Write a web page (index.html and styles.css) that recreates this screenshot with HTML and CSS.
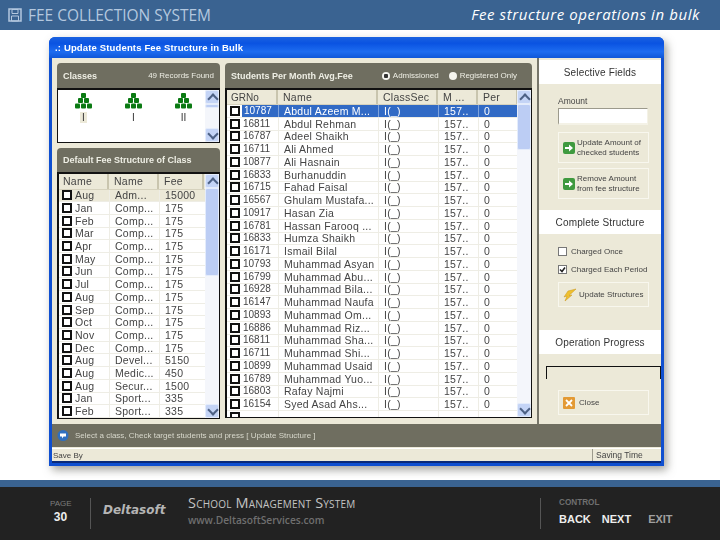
FILE: index.html
```html
<!DOCTYPE html>
<html>
<head>
    <meta charset="utf-8">
    <title>Fee structure operations in bulk</title>
    <link rel="stylesheet" href="styles.css">
</head>
<body>
<div class="page">
    <header class="top-bar">
        <div class="system-name">
            <svg class="disk-icon" viewBox="0 0 14 14" width="14" height="14">
                <path d="M1 1h12v12H1z" fill="none" stroke="#b4c8df" stroke-width="1.5"/>
                <path d="M4 1.5h6v4H4zM3.5 8h7v5h-7z" fill="none" stroke="#b4c8df"/>
            </svg>
            FEE COLLECTION SYSTEM
        </div>
        <div class="slide-title">Fee structure operations in bulk</div>
    </header>

    <main class="stage">
        <div class="window">
            <div class="title-bar">.: Update Students Fee Structure in Bulk</div>
            <div class="client">
                <div class="work">
                    <div class="left-col">
                        <div class="panel-head">
                            <span>Classes</span>
                            <span class="found">49 Records Found</span>
                        </div>
                        <div class="class-box">
                            <div class="class-icons">
                                <div class="class-item">
                                    <svg class="tree" viewBox="0 0 17 16" width="17" height="16"><use href="#tree"/></svg>
                                    <span class="class-name picked">I</span>
                                </div>
                                <div class="class-item">
                                    <svg class="tree" viewBox="0 0 17 16" width="17" height="16"><use href="#tree"/></svg>
                                    <span class="class-name">I</span>
                                </div>
                                <div class="class-item">
                                    <svg class="tree" viewBox="0 0 17 16" width="17" height="16"><use href="#tree"/></svg>
                                    <span class="class-name">II</span>
                                </div>
                            </div>
                            <div class="scrollbar">
                                <div class="arrow up"></div>
                                <div class="thumb short"></div>
                                <div class="track"></div>
                                <div class="arrow down"></div>
                            </div>
                        </div>

                        <div class="panel-head second">
                            <span>Default Fee Structure of Class</span>
                        </div>
                        <div class="list-box fee-box">
                            <div class="list">
                                <div class="fee-row list-head"><span>Name</span><span>Name</span><span>Fee</span></div>
                                <div class="fee-row marked"><span><i class="check"></i>Aug</span><span>Adm...</span><span>15000</span></div>
                                <div class="fee-row"><span><i class="check"></i>Jan</span><span>Comp...</span><span>175</span></div>
                                <div class="fee-row"><span><i class="check"></i>Feb</span><span>Comp...</span><span>175</span></div>
                                <div class="fee-row"><span><i class="check"></i>Mar</span><span>Comp...</span><span>175</span></div>
                                <div class="fee-row"><span><i class="check"></i>Apr</span><span>Comp...</span><span>175</span></div>
                                <div class="fee-row"><span><i class="check"></i>May</span><span>Comp...</span><span>175</span></div>
                                <div class="fee-row"><span><i class="check"></i>Jun</span><span>Comp...</span><span>175</span></div>
                                <div class="fee-row"><span><i class="check"></i>Jul</span><span>Comp...</span><span>175</span></div>
                                <div class="fee-row"><span><i class="check"></i>Aug</span><span>Comp...</span><span>175</span></div>
                                <div class="fee-row"><span><i class="check"></i>Sep</span><span>Comp...</span><span>175</span></div>
                                <div class="fee-row"><span><i class="check"></i>Oct</span><span>Comp...</span><span>175</span></div>
                                <div class="fee-row"><span><i class="check"></i>Nov</span><span>Comp...</span><span>175</span></div>
                                <div class="fee-row"><span><i class="check"></i>Dec</span><span>Comp...</span><span>175</span></div>
                                <div class="fee-row"><span><i class="check"></i>Aug</span><span>Devel...</span><span>5150</span></div>
                                <div class="fee-row"><span><i class="check"></i>Aug</span><span>Medic...</span><span>450</span></div>
                                <div class="fee-row"><span><i class="check"></i>Aug</span><span>Secur...</span><span>1500</span></div>
                                <div class="fee-row"><span><i class="check"></i>Jan</span><span>Sport...</span><span>335</span></div>
                                <div class="fee-row"><span><i class="check"></i>Feb</span><span>Sport...</span><span>335</span></div>
                            </div>
                            <div class="scrollbar">
                                <div class="arrow up"></div>
                                <div class="thumb tall"></div>
                                <div class="track"></div>
                                <div class="arrow down"></div>
                            </div>
                        </div>
                    </div>

                    <div class="mid-col">
                        <div class="panel-head">
                            <span>Students Per Month Avg.Fee</span>
                            <span class="radios">
                                <span class="radio"><i class="dot on"></i>Admissioned</span>
                                <span class="radio"><i class="dot"></i>Registered Only</span>
                            </span>
                        </div>
                        <div class="list-box student-box">
                            <div class="list">
                                <div class="student-row list-head"><span>GRNo</span><span>Name</span><span>ClassSec</span><span>M ...</span><span>Per</span></div>
                                <div class="student-row selected"><span><i class="check"></i><b>10787</b></span><span>Abdul Azeem M...</span><span>I(_)</span><span>157..</span><span>0</span></div>
                                <div class="student-row"><span><i class="check"></i>16811</span><span>Abdul Rehman</span><span>I(_)</span><span>157..</span><span>0</span></div>
                                <div class="student-row"><span><i class="check"></i>16787</span><span>Adeel Shaikh</span><span>I(_)</span><span>157..</span><span>0</span></div>
                                <div class="student-row"><span><i class="check"></i>16711</span><span>Ali Ahmed</span><span>I(_)</span><span>157..</span><span>0</span></div>
                                <div class="student-row"><span><i class="check"></i>10877</span><span>Ali Hasnain</span><span>I(_)</span><span>157..</span><span>0</span></div>
                                <div class="student-row"><span><i class="check"></i>16833</span><span>Burhanuddin</span><span>I(_)</span><span>157..</span><span>0</span></div>
                                <div class="student-row"><span><i class="check"></i>16715</span><span>Fahad Faisal</span><span>I(_)</span><span>157..</span><span>0</span></div>
                                <div class="student-row"><span><i class="check"></i>16567</span><span>Ghulam Mustafa...</span><span>I(_)</span><span>157..</span><span>0</span></div>
                                <div class="student-row"><span><i class="check"></i>10917</span><span>Hasan Zia</span><span>I(_)</span><span>157..</span><span>0</span></div>
                                <div class="student-row"><span><i class="check"></i>16781</span><span>Hassan Farooq ...</span><span>I(_)</span><span>157..</span><span>0</span></div>
                                <div class="student-row"><span><i class="check"></i>16833</span><span>Humza Shaikh</span><span>I(_)</span><span>157..</span><span>0</span></div>
                                <div class="student-row"><span><i class="check"></i>16171</span><span>Ismail Bilal</span><span>I(_)</span><span>157..</span><span>0</span></div>
                                <div class="student-row"><span><i class="check"></i>10793</span><span>Muhammad Asyan</span><span>I(_)</span><span>157..</span><span>0</span></div>
                                <div class="student-row"><span><i class="check"></i>16799</span><span>Muhammad Abu...</span><span>I(_)</span><span>157..</span><span>0</span></div>
                                <div class="student-row"><span><i class="check"></i>16928</span><span>Muhammad Bila...</span><span>I(_)</span><span>157..</span><span>0</span></div>
                                <div class="student-row"><span><i class="check"></i>16147</span><span>Muhammad Naufa</span><span>I(_)</span><span>157..</span><span>0</span></div>
                                <div class="student-row"><span><i class="check"></i>10893</span><span>Muhammad Om...</span><span>I(_)</span><span>157..</span><span>0</span></div>
                                <div class="student-row"><span><i class="check"></i>16886</span><span>Muhammad Riz...</span><span>I(_)</span><span>157..</span><span>0</span></div>
                                <div class="student-row"><span><i class="check"></i>16811</span><span>Muhammad Sha...</span><span>I(_)</span><span>157..</span><span>0</span></div>
                                <div class="student-row"><span><i class="check"></i>16711</span><span>Muhammad Shi...</span><span>I(_)</span><span>157..</span><span>0</span></div>
                                <div class="student-row"><span><i class="check"></i>10899</span><span>Muhammad Usaid</span><span>I(_)</span><span>157..</span><span>0</span></div>
                                <div class="student-row"><span><i class="check"></i>16789</span><span>Muhammad Yuo...</span><span>I(_)</span><span>157..</span><span>0</span></div>
                                <div class="student-row"><span><i class="check"></i>16803</span><span>Rafay Najmi</span><span>I(_)</span><span>157..</span><span>0</span></div>
                                <div class="student-row"><span><i class="check"></i>16154</span><span>Syed Asad Ahs...</span><span>I(_)</span><span>157..</span><span>0</span></div>
                                <div class="student-row stub"><span><i class="check"></i></span><span></span><span></span><span></span><span></span></div>
                            </div>
                            <div class="scrollbar">
                                <div class="arrow up"></div>
                                <div class="thumb mid-thumb"></div>
                                <div class="track"></div>
                                <div class="arrow down"></div>
                            </div>
                        </div>
                    </div>

                    <aside class="right-col">
                        <div class="side-head first">Selective Fields</div>
                        <div class="side-body selective">
                            <label class="amount-label" for="amount">Amount</label>
                            <input id="amount" class="amount" type="text">
                            <div class="side-btn two-line">
                                <svg viewBox="0 0 12 12" width="12" height="12"><rect width="12" height="12" rx="2" fill="#3f9a3f"/><path d="M2 5h4V2.500L10 6 6 9.500V7H2z" fill="#fff"/></svg>
                                <span>Update Amount of checked students</span>
                            </div>
                            <div class="side-btn two-line">
                                <svg viewBox="0 0 12 12" width="12" height="12"><rect width="12" height="12" rx="2" fill="#3f9a3f"/><path d="M2 5h4V2.500L10 6 6 9.500V7H2z" fill="#fff"/></svg>
                                <span>Remove Amount from fee structure</span>
                            </div>
                        </div>
                        <div class="side-head">Complete Structure</div>
                        <div class="side-body complete">
                            <div class="tick-line"><i class="tick"></i>Charged Once</div>
                            <div class="tick-line">
                                <svg class="tick-mark" viewBox="0 0 9 9" width="9" height="9"><rect x=".5" y=".5" width="8" height="8" fill="#fff" stroke="#777"/><path d="m2 4.500 2 2 3-4" fill="none" stroke="#222" stroke-width="1.500"/></svg>
                                Charged Each Period
                            </div>
                            <div class="side-btn one-line">
                                <svg viewBox="0 0 14 14" width="14" height="14"><path d="M13 1 5 3 1 9l3-1-2 5 7-6-3 .5z" fill="#efc02e" stroke="#c9941a" stroke-width=".5"/></svg>
                                <span>Update Structures</span>
                            </div>
                        </div>
                        <div class="side-head">Operation Progress</div>
                        <div class="side-body progress-area">
                            <div class="progress"></div>
                            <div class="side-btn one-line close">
                                <svg viewBox="0 0 12 12" width="12" height="12"><rect width="12" height="12" rx="1" fill="#e39a35"/><path d="m3 3 6 6M9 3 3 9" stroke="#fff" stroke-width="1.800"/></svg>
                                <span>Close</span>
                            </div>
                        </div>
                    </aside>
                </div>

                <div class="message-bar">
                    <svg viewBox="0 0 12 12" width="12" height="12"><circle cx="6" cy="5.500" r="5.500" fill="#2f6fc0"/><path d="M3 3.500h6v3H6.500l-1.500 2v-2H3z" fill="#fff"/></svg>
                    <span>Select a class, Check target students and press [ Update Structure ]</span>
                </div>

                <div class="status-bar">
                    <span>Save By</span>
                    <span class="status-right">Saving Time</span>
                </div>
            </div>
        </div>
    </main>

    <div class="blue-strip"></div>
    <footer class="footer">
        <div class="page-no">
            <span class="page-label">PAGE</span>
            <span class="page-num">30</span>
        </div>
        <div class="brand">Deltasoft</div>
        <div class="product">
            <div class="product-name">School Management System</div>
            <div class="product-url">www.DeltasoftServices.com</div>
        </div>
        <div class="control">
            <div class="control-label">CONTROL</div>
            <div class="control-links">
                <a>BACK</a>
                <a>NEXT</a>
                <a class="exit">EXIT</a>
            </div>
        </div>
    </footer>
</div>

<svg class="defs" width="0" height="0">
    <defs>
        <g id="tree" fill="#0a7a12">
            <rect x="6" y="0" width="5" height="5" rx="1"/>
            <rect x="3" y="5" width="5" height="5" rx="1"/>
            <rect x="9" y="5" width="5" height="5" rx="1"/>
            <rect x="0" y="10.500" width="5" height="5" rx="1"/>
            <rect x="6" y="10.500" width="5" height="5" rx="1"/>
            <rect x="12" y="10.500" width="5" height="5" rx="1"/>
        </g>
    </defs>
</svg>
</body>
</html>
```

FILE: styles.css
```css
* {
    box-sizing: border-box;
}

body {
    margin: 0;
    background-color: #fff;
    font-family: "Liberation Sans", sans-serif;
}

.page {
    width: 720px;
    height: 540px;
    display: flex;
    flex-direction: column;
    overflow: hidden;
}

.defs {
    position: absolute;
}

/* top bar */
.top-bar {
    height: 30px;
    flex: none;
    background-color: #3a6391;
    display: flex;
    justify-content: space-between;
    align-items: center;
    padding: 0 20px 2px 8px;
}

.system-name {
    display: flex;
    align-items: center;
    gap: 6px;
    color: #b4c8df;
    font-family: "Open Sans", sans-serif;
    font-size: 15.500px;
    padding-top: 2px;
}

.slide-title {
    color: #fff;
    font-family: "Open Sans", sans-serif;
    font-style: italic;
    font-size: 15px;
    letter-spacing: .6px;
}

/* the captured window */
.stage {
    flex: none;
    height: 450px;
    padding: 7px 0 0 49px;
}

.window {
    width: 615px;
    height: 429px;
    border-radius: 6px 6px 0 0;
    background-color: #0f4fd0;
    box-shadow: 3px 4px 8px rgba(90, 90, 80, .55);
    display: flex;
    flex-direction: column;
    filter: blur(.35px);
}

.title-bar {
    height: 21px;
    flex: none;
    padding: 1px 0 0 6px;
    line-height: 19px;
    color: #fff;
    font-size: 9.500px;
    font-weight: bold;
    letter-spacing: .15px;
    border-radius: 6px 6px 0 0;
    background: linear-gradient(#1a62e0, #0a53e2 30%, #1d6cf0 70%, #0f57d8);
}

.client {
    flex: 1;
    margin: 0 3px 3px 3px;
    background-color: #ece9d8;
    display: flex;
    flex-direction: column;
    border-bottom: 2px solid #0a2a78;
    min-height: 0;
}

.work {
    height: 366px;
    flex: none;
    display: flex;
}

.left-col {
    width: 168px;
    padding: 5px 0 0 5px;
    flex: none;
}

.mid-col {
    width: 312px;
    padding: 5px 0 0 5px;
    flex: none;
}

.panel-head {
    height: 25px;
    padding: 0 6px;
    display: flex;
    justify-content: space-between;
    align-items: center;
    background-color: #6f6e60;
    color: #eeeee4;
    font-size: 9px;
    font-weight: bold;
    white-space: nowrap;
    border-radius: 4px 4px 0 0;
}

.panel-head.second {
    margin-top: 5px;
    height: 24px;
}

.found {
    font-weight: normal;
    font-size: 8px;
}

.radios {
    display: flex;
    gap: 10px;
    font-weight: normal;
    font-size: 8px;
    padding-right: 9px;
}

.radio {
    display: flex;
    align-items: center;
    gap: 3px;
}

.dot {
    width: 8px;
    height: 8px;
    border-radius: 50%;
    background-color: #f4f4ee;
    display: block;
}

.dot.on {
    background: radial-gradient(circle, #333 0 2px, #f4f4ee 2.500px);
}

/* classes box */
.class-box {
    height: 55px;
    border: 1px solid #111;
    border-width: 2px 1px 1px;
    background-color: #fff;
    display: flex;
}

.class-icons {
    flex: 1;
    display: flex;
    padding: 3px 13px 0 17px;
    justify-content: space-between;
}

.class-item {
    width: 17px;
    display: flex;
    flex-direction: column;
    align-items: center;
    gap: 3px;
    font-size: 10px;
}

.class-name {
    color: #333;
    padding: 0 2px;
}

.class-name.picked {
    background-color: #ece9d8;
}

/* lists */
.list-box {
    border: 2px solid #111;
    border-width: 2px 1px 1px 2px;
    background-color: #fff;
    display: flex;
    overflow: hidden;
}

.fee-box {
    height: 247px;
}

.student-box {
    height: 330px;
}

.list {
    flex: 1;
    min-width: 0;
    overflow: hidden;
}

.fee-row, .student-row {
    display: grid;
    height: 12.750px;
    line-height: 12px;
    font-size: 10.500px;
    letter-spacing: .25px;
    color: #444;
    border-bottom: 1px solid #eeede5;
    white-space: nowrap;
}

.fee-row {
    height: 12.700px;
    grid-template-columns: 50px 50px 45px;
}

.student-row {
    grid-template-columns: 51px 100px 60px 40px 40px;
}

.fee-row span, .student-row span {
    display: flex;
    align-items: center;
    overflow: hidden;
    padding-left: 5px;
    border-left: 1px solid #eeede5;
}

.fee-row span:first-child, .student-row span:first-child {
    border-left: none;
    padding-left: 3px;
}

.student-row span:first-child {
    font-size: 10px;
    letter-spacing: 0;
}

.fee-row.list-head, .student-row.list-head {
    background-color: #ece9d8;
    border-bottom: 1px solid #d6d2bd;
    line-height: 15px;
}

.fee-row.list-head {
    height: 15.500px;
}

.student-row.list-head {
    height: 15px;
}

.list-head span {
    border-left: none;
    border-right: 2px solid #c9c5ae;
}

.list-head span:first-child {
    padding-left: 4px;
}

.marked {
    background-color: #ece9d8;
}

.selected span {
    background-color: #316ac5;
    color: #fff;
    border-left-color: #7fa3dc;
}

.selected span:first-child {
    background-color: #fff;
    color: #444;
}

.selected b {
    font-weight: normal;
    color: #fff;
    background-color: #316ac5;
    padding: 0 5px 0 2px;
    margin-left: -1px;
    height: 100%;
    flex: 1;
    line-height: 12px;
}

.check {
    flex: none;
    width: 10px;
    height: 10px;
    border: 2px solid #111;
    background-color: #fff;
    margin-right: 3px;
    display: block;
}

.stub {
    border-bottom: none;
}

/* xp style scrollbar */
.scrollbar {
    width: 14px;
    flex: none;
    display: flex;
    flex-direction: column;
    background-color: #f4f6fb;
}

.arrow {
    height: 14px;
    flex: none;
    border-radius: 2px;
    background-color: #c4d4f6;
    border: 1px solid #e4ecfb;
    position: relative;
}

.arrow::after {
    content: "";
    position: absolute;
    left: 3px;
    width: 6px;
    height: 6px;
    border-left: 2px solid #4d6185;
    border-top: 2px solid #4d6185;
    transform: rotate(45deg);
}

.arrow.up::after {
    top: 4px;
}

.arrow.down::after {
    top: 1px;
    transform: rotate(225deg);
}

.thumb {
    flex: none;
    background-color: #bccdf4;
    border: 1px solid #e4ecfb;
    border-radius: 2px;
}

.thumb.short {
    height: 4px;
}

.thumb.tall {
    height: 88px;
}

.thumb.mid-thumb {
    height: 46px;
}

.track {
    flex: 1;
}

/* right side panel */
.right-col {
    width: 124px;
    flex: none;
    margin-left: 5px;
    border-left: 2px solid #77766a;
    color: #444;
}

.side-head {
    height: 24px;
    background-color: #fff;
    display: flex;
    align-items: center;
    justify-content: center;
    font-size: 10px;
    letter-spacing: .15px;
    color: #333;
}

.side-head.first {
    margin-top: 2px;
}

.side-body {
    padding: 0 12px 0 19px;
}

.selective {
    height: 126px;
    padding-top: 13px;
}

.amount-label {
    display: block;
    height: 11px;
    line-height: 9px;
    font-size: 8.500px;
}

.amount {
    display: block;
    width: 90px;
    height: 17px;
    border: 1px solid #b8b5a2;
    border-width: 1px 1px 2px 1px;
    border-color: #9c9a8c #f4f2e6 #f4f2e6 #9c9a8c;
    background-color: #fff;
    padding: 0;
    margin-bottom: 7px;
}

.side-btn {
    width: 91px;
    border: 1px solid #f8f7ee;
    display: flex;
    align-items: center;
    gap: 2px;
    padding-left: 4px;
    font-size: 8px;
    line-height: 9.500px;
    color: #444;
}

.side-btn svg {
    flex: none;
}

.two-line {
    height: 31px;
    margin-bottom: 5px;
}

.one-line {
    height: 25px;
    white-space: nowrap;
}

.complete {
    height: 96px;
    padding-top: 8px;
}

.tick-line {
    height: 18px;
    display: flex;
    align-items: center;
    gap: 4px;
    font-size: 8px;
    white-space: nowrap;
}

.tick {
    width: 9px;
    height: 9px;
    border: 1px solid #777;
    background-color: #fff;
    display: block;
    flex: none;
}

.tick-mark {
    flex: none;
}

.complete .side-btn {
    margin-top: 4px;
}

.progress-area {
    padding: 12px 0 0 7px;
}

.progress {
    height: 13px;
    border: 1px solid #111;
    border-bottom: none;
    margin-bottom: 11px;
}

.close {
    margin-left: 12px;
    gap: 4px;
}

.message-bar {
    height: 23px;
    flex: none;
    background-color: #6f6e60;
    color: #d8d8cc;
    font-size: 8px;
    display: flex;
    align-items: center;
    gap: 6px;
    padding-left: 5px;
}

.status-bar {
    flex: 1;
    border-top: 1px solid #fff;
    margin-top: 1px;
    display: flex;
    justify-content: space-between;
    align-items: center;
    padding: 0 0 0 1px;
    font-size: 8px;
    color: #444;
    min-height: 0;
}

.status-right {
    width: 69px;
    border-left: 1px solid #9c9a8c;
    padding-left: 3px;
    height: 100%;
    display: flex;
    align-items: center;
    font-size: 8.500px;
}

/* footer */
.blue-strip {
    height: 7px;
    flex: none;
    background-color: #3a6391;
}

.footer {
    flex: 1;
    background-color: #222;
    display: flex;
    align-items: flex-start;
    padding: 11px 0 0 50px;
}

.page-no {
    width: 41px;
    height: 31px;
    padding-top: 1px;
    display: flex;
    flex-direction: column;
    border-right: 1px solid #555;
    gap: 2px;
}

.page-label {
    font-size: 8px;
    color: #7d7d7d;
}

.page-num {
    width: 21px;
    text-align: center;
    font-size: 12px;
    font-weight: bold;
    color: #eee;
}

.brand {
    width: 97px;
    padding: 5px 0 0 12px;
    color: #b5b5b5;
    font-family: "DejaVu Sans", sans-serif;
    font-size: 12px;
    font-weight: bold;
    font-style: italic;
}

.product {
    width: 353px;
    height: 31px;
    border-right: 1px solid #555;
}

.product-name {
    font-family: "Open Sans", sans-serif;
    font-variant: small-caps;
    color: #c4c4c4;
    font-size: 14.500px;
    letter-spacing: .2px;
    line-height: 14px;
    margin-top: -2px;
}

.product-url {
    font-family: "Open Sans", sans-serif;
    color: #6f6f6f;
    font-size: 10.200px;
    font-weight: 600;
    margin-top: 3px;
}

.control {
    padding: 0 0 0 18px;
}

.control-label {
    font-size: 8.200px;
    font-weight: bold;
    color: #6f6f6f;
    line-height: 9px;
    margin-bottom: 6px;
}

.control-links {
    display: flex;
    gap: 11px;
    font-size: 11px;
    font-weight: bold;
    color: #eee;
}

.exit {
    margin-left: 6px;
    color: #a0a0a0;
}
```
